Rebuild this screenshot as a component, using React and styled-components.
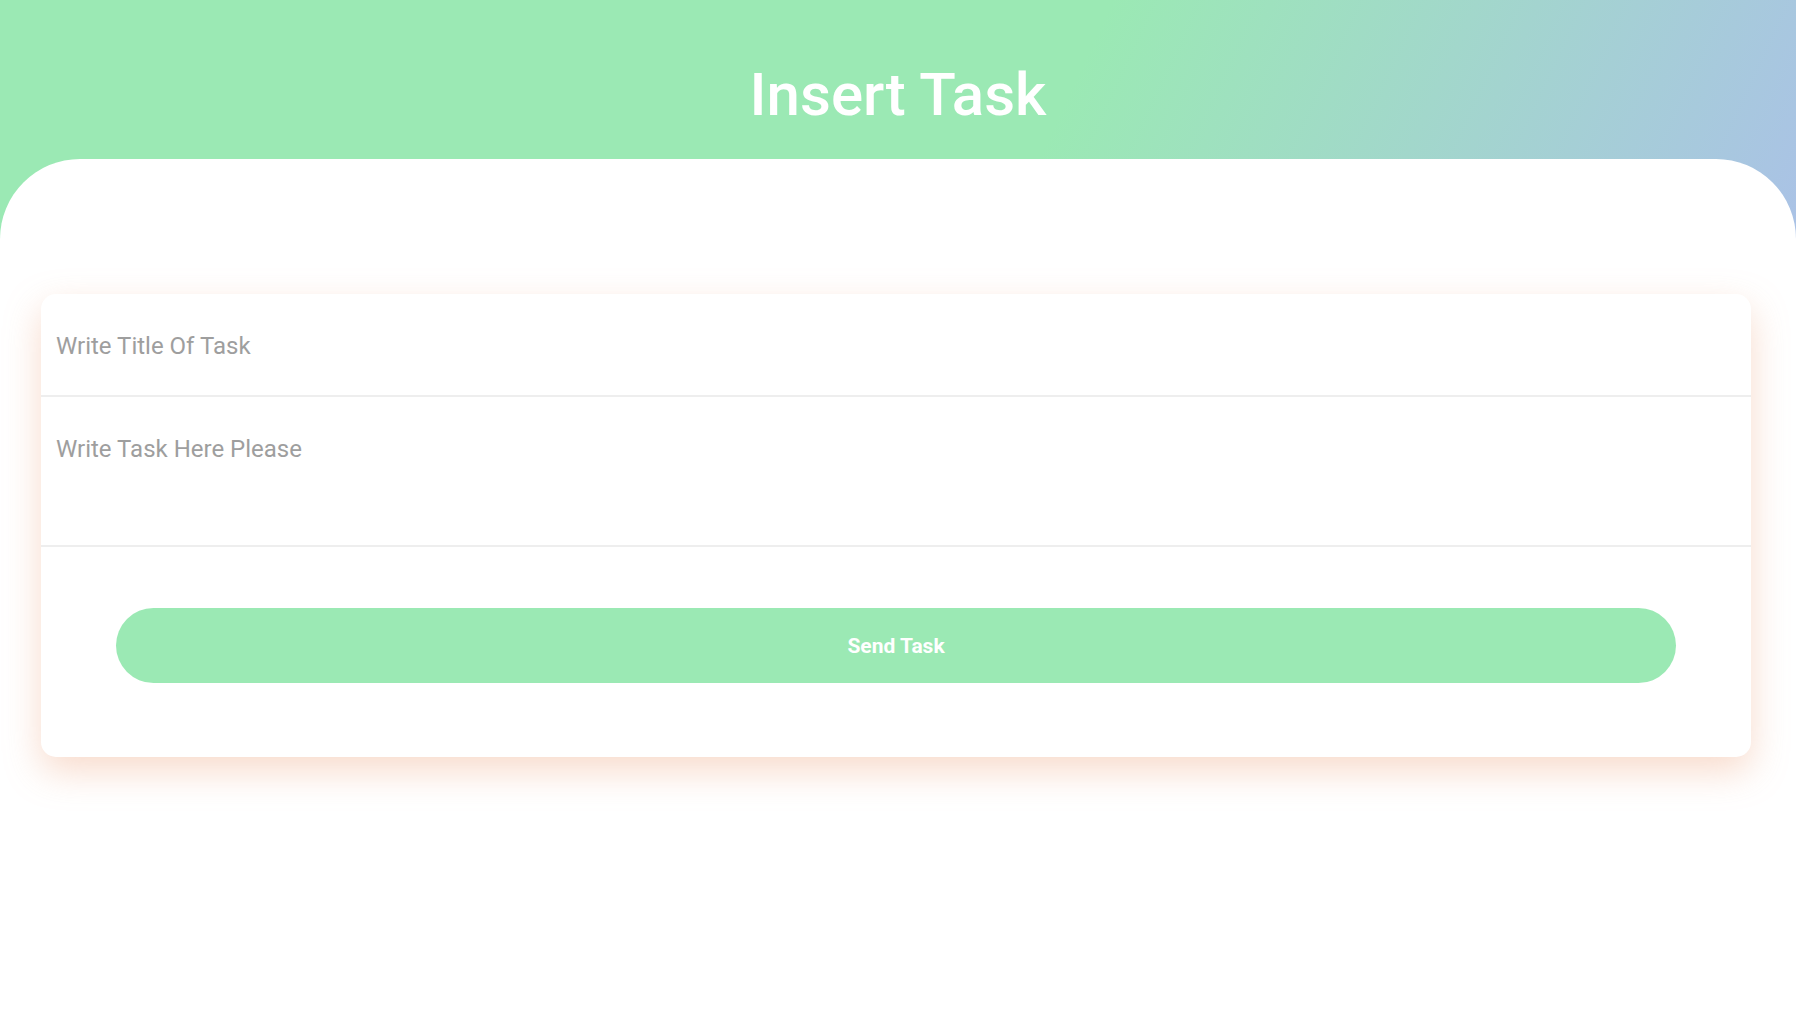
import React from "react";
import styled, { createGlobalStyle } from "styled-components";

const GlobalStyle = createGlobalStyle`
	body {
		margin: 0;
		font-family: Roboto, "Liberation Sans", sans-serif;
	}
	* {
		box-sizing: border-box;
	}
`;

const Page = styled.div`
	min-height: 100vh;
	display: flex;
	flex-direction: column;
	background: linear-gradient(115deg, #9be9b4 49%, #aac2e6 84%);
`;

const Header = styled.header`
	height: 159px;
	padding-top: 65px;
	display: flex;
	justify-content: center;
`;

const Title = styled.h1`
	margin: 0;
	font-size: 60px;
	line-height: 1;
	font-weight: 500;
	color: #ffffff;
`;

const Panel = styled.main`
	flex: 1;
	background-color: #ffffff;
	border-radius: 80px 80px 0 0;
	padding: 135px 45px 40px 41px;
`;

const Card = styled.form`
	background-color: #ffffff;
	border-radius: 15px;
	box-shadow: 0 14px 36px rgba(236, 160, 122, 0.38);
`;

const TitleInput = styled.input`
	display: block;
	width: 100%;
	height: 103px;
	padding: 2px 15px 0;
	border: none;
	border-bottom: 2px solid #eeeeee;
	background: transparent;
	outline: none;
	font-family: inherit;
	font-size: 24px;
	color: #555555;

	&::placeholder {
		color: #9e9e9e;
	}
`;

const TaskArea = styled.textarea`
	display: block;
	width: 100%;
	height: 150px;
	padding: 38px 15px 0;
	border: none;
	border-bottom: 2px solid #eeeeee;
	background: transparent;
	outline: none;
	resize: none;
	font-family: inherit;
	font-size: 24px;
	color: #555555;

	&::placeholder {
		color: #9e9e9e;
	}
`;

const ButtonRow = styled.div`
	padding: 61px 75px 74px;
`;

const SendButton = styled.button`
	display: block;
	width: 100%;
	height: 75px;
	border: none;
	border-radius: 40px;
	background-color: #9be9b4;
	color: #ffffff;
	font-family: inherit;
	font-size: 21px;
	font-weight: 700;
	cursor: pointer;
`;

const App = () => {
	return (
		<>
			<GlobalStyle />
			<Page>
				<Header>
					<Title>Insert Task</Title>
				</Header>
				<Panel>
					<Card onSubmit={(e) => e.preventDefault()}>
						<TitleInput placeholder="Write Title Of Task" />
						<TaskArea placeholder="Write Task Here Please" />
						<ButtonRow>
							<SendButton type="submit">Send Task</SendButton>
						</ButtonRow>
					</Card>
				</Panel>
			</Page>
		</>
	);
};

export default App;
